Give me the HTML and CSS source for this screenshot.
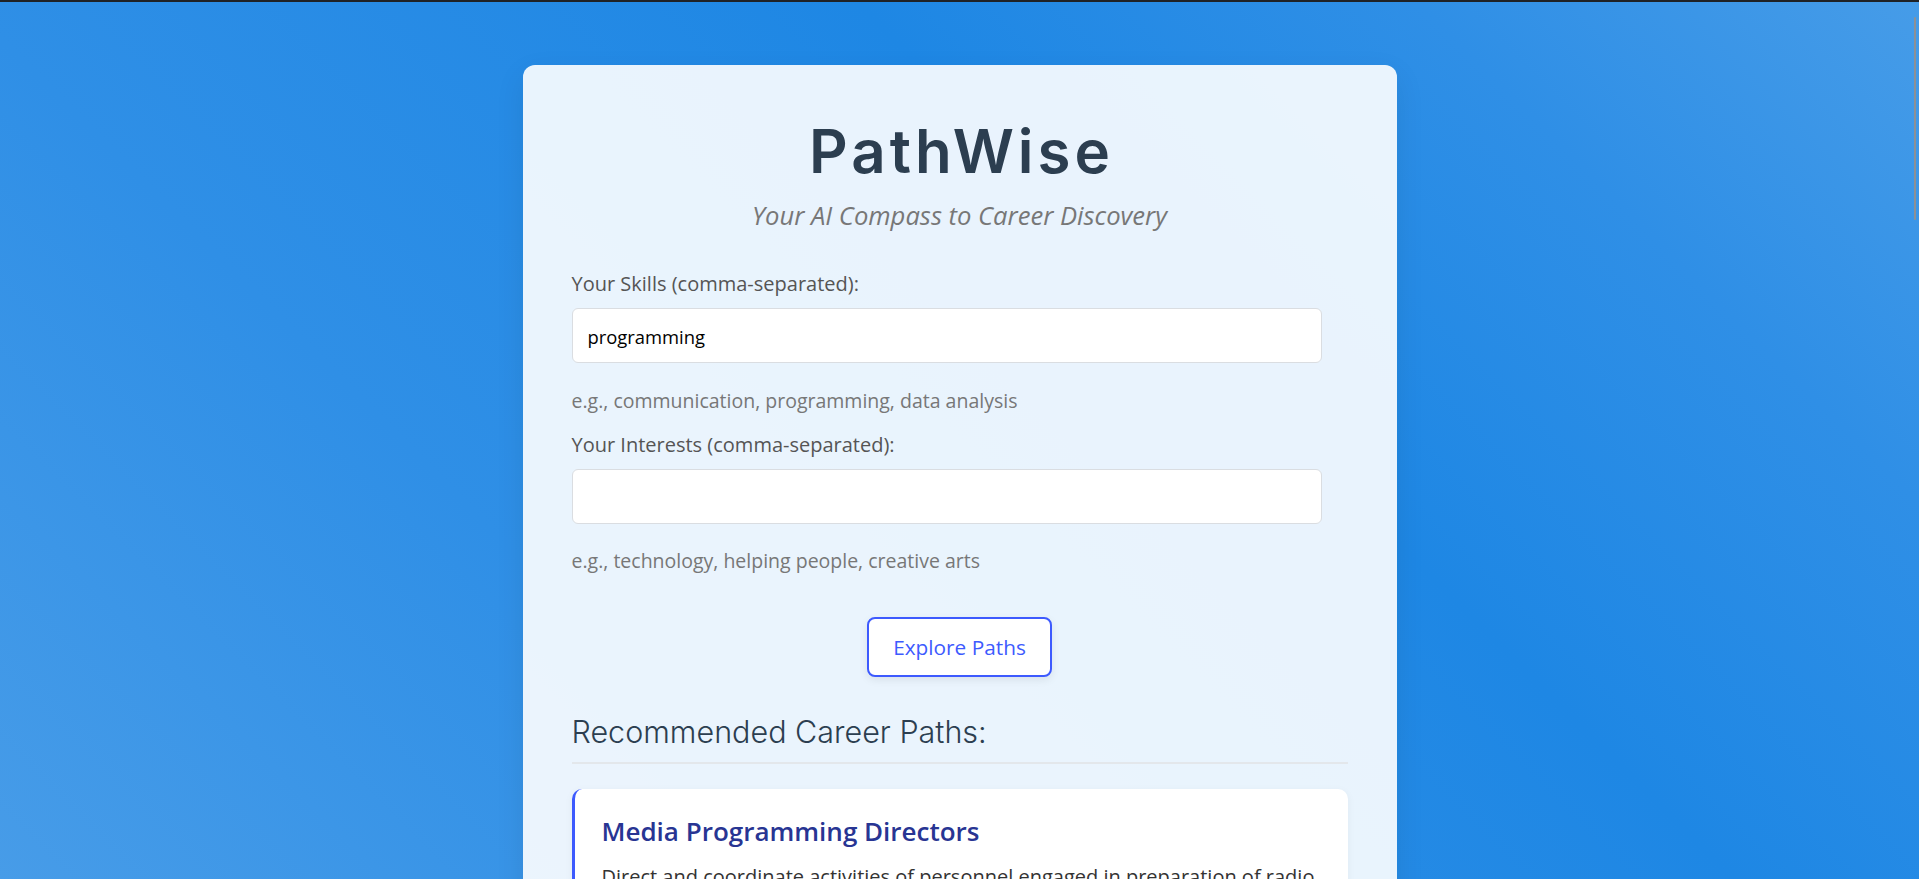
FILE: index.html
```html
<!DOCTYPE html>
<html lang="en">
<head>
<meta charset="utf-8">
<title>PathWise</title>
<link rel="stylesheet" href="styles.css">
</head>
<body>
<div class="scroll-thumb"></div>
<main class="panel">
  <header class="brand">
    <h1 class="brand-title">PathWise</h1>
    <p class="brand-tagline">Your AI Compass to Career Discovery</p>
  </header>

  <form class="finder">
    <div class="field">
      <label class="field-label" for="skills">Your Skills (comma-separated):</label>
      <input class="field-input" id="skills" type="text" value="programming">
      <small class="field-hint">e.g., communication, programming, data analysis</small>
    </div>
    <div class="field">
      <label class="field-label" for="interests">Your Interests (comma-separated):</label>
      <input class="field-input" id="interests" type="text" value="">
      <small class="field-hint">e.g., technology, helping people, creative arts</small>
    </div>
    <div class="actions">
      <button class="explore-btn" type="button">Explore Paths</button>
    </div>
  </form>

  <section class="results">
    <h2 class="results-title">Recommended Career Paths:</h2>
    <ul class="career-list">
      <li class="career">
        <h3 class="career-name">Media Programming Directors</h3>
        <p class="career-desc">Direct and coordinate activities of personnel engaged in preparation of radio or television station program schedules and programs, such as sports or news.</p>
      </li>
      <li class="career">
        <h3 class="career-name">Computer Programmers</h3>
        <p class="career-desc">Create, modify, and test the code and scripts that allow computer applications to run. Work from specifications drawn up by software and web developers or other individuals.</p>
      </li>
      <li class="career">
        <h3 class="career-name">Software Developers</h3>
        <p class="career-desc">Research, design, and develop computer and network software or specialized utility programs.</p>
      </li>
    </ul>
  </section>
</main>
</body>
</html>
```

FILE: styles.css
```css
* {
  box-sizing: border-box;
}

html {
  border-top: 2px solid #1f2226;
  background: linear-gradient(45deg, #479ce8 0%, #2f8fe6 30%, #1e87e4 62%, #2f8fe6 82%, #469ce8 100%) fixed;
  min-height: 100%;
  scrollbar-width: none;
}

html::-webkit-scrollbar {
  display: none;
}

body {
  margin: 0;
  padding: 63px 0 60px;
  font-family: "Open Sans", "Noto Sans", sans-serif;
  color: #333;
}

.scroll-thumb {
  position: fixed;
  top: 17px;
  right: 3px;
  width: 2px;
  height: 203px;
  background: #8c9096;
  border-radius: 1px;
}

.panel {
  width: 874px;
  margin: 0 auto;
  padding: 50px 49px 40px;
  background: rgba(255, 255, 255, 0.9);
  border-radius: 12px;
  box-shadow: 0 10px 30px rgba(0, 0, 0, 0.08);
}

.brand {
  text-align: center;
}

.brand-title {
  margin: 0 0 12px;
  padding-left: 4px;
  font-family: Inter, "Noto Sans", sans-serif;
  font-weight: 600;
  font-size: 60px;
  line-height: 72px;
  letter-spacing: 4px;
  color: #2c3e50;
}

.brand-tagline {
  margin: 0;
  font-style: italic;
  font-size: 25.6px;
  line-height: 34px;
  color: #777;
}

.finder {
  margin-top: 38px;
}

.field {
  display: flex;
  flex-direction: column;
  align-items: flex-start;
}

.field + .field {
  margin-top: 18px;
}

.field-label {
  font-size: 20px;
  line-height: 26px;
  color: #555;
  margin-bottom: 11px;
}

.field-input {
  width: calc(100% - 26px);
  height: 55px;
  padding: 2px 15px 0;
  border: 1px solid #dadde1;
  border-radius: 6px;
  background: #fff;
  font-family: "Open Sans", "Noto Sans", sans-serif;
  font-weight: 500;
  font-size: 18.4px;
  color: #000;
  outline: none;
}

.field-hint {
  margin-top: 24.5px;
  font-size: 19.5px;
  line-height: 26px;
  color: #777;
}

.actions {
  display: flex;
  justify-content: center;
  margin-top: 43px;
}

.explore-btn {
  width: 185px;
  height: 60px;
  padding: 0;
  border: 2px solid #3d5afe;
  border-radius: 8px;
  background: #fff;
  font-family: "Open Sans", "Noto Sans", sans-serif;
  font-size: 20.8px;
  line-height: 28px;
  color: #3d5afe;
  box-shadow: 0 3px 8px rgba(0, 0, 0, 0.08);
  cursor: pointer;
}

.results {
  margin-top: 36px;
}

.results-title {
  margin: 0 0 25px;
  padding-bottom: 11.5px;
  border-bottom: 2px solid #e3e7eb;
  font-family: Inter, "Noto Sans", sans-serif;
  font-weight: 300;
  font-size: 30.5px;
  line-height: 37px;
  color: #2c3e50;
}

.career-list {
  list-style: none;
  margin: 0;
  padding: 0;
  display: flex;
  flex-direction: column;
  gap: 20px;
}

.career {
  background: #fff;
  border-left: 3px solid #3d5afe;
  border-radius: 10px;
  padding: 26.5px 27px 24px 27px;
  box-shadow: 0 2px 8px rgba(0, 0, 0, 0.05);
}

.career-name {
  margin: 0 0 14px;
  font-weight: 600;
  font-size: 26px;
  line-height: 33px;
  color: #283593;
}

.career-desc {
  margin: 0;
  font-size: 20px;
  line-height: 29px;
  color: #333;
}
```
